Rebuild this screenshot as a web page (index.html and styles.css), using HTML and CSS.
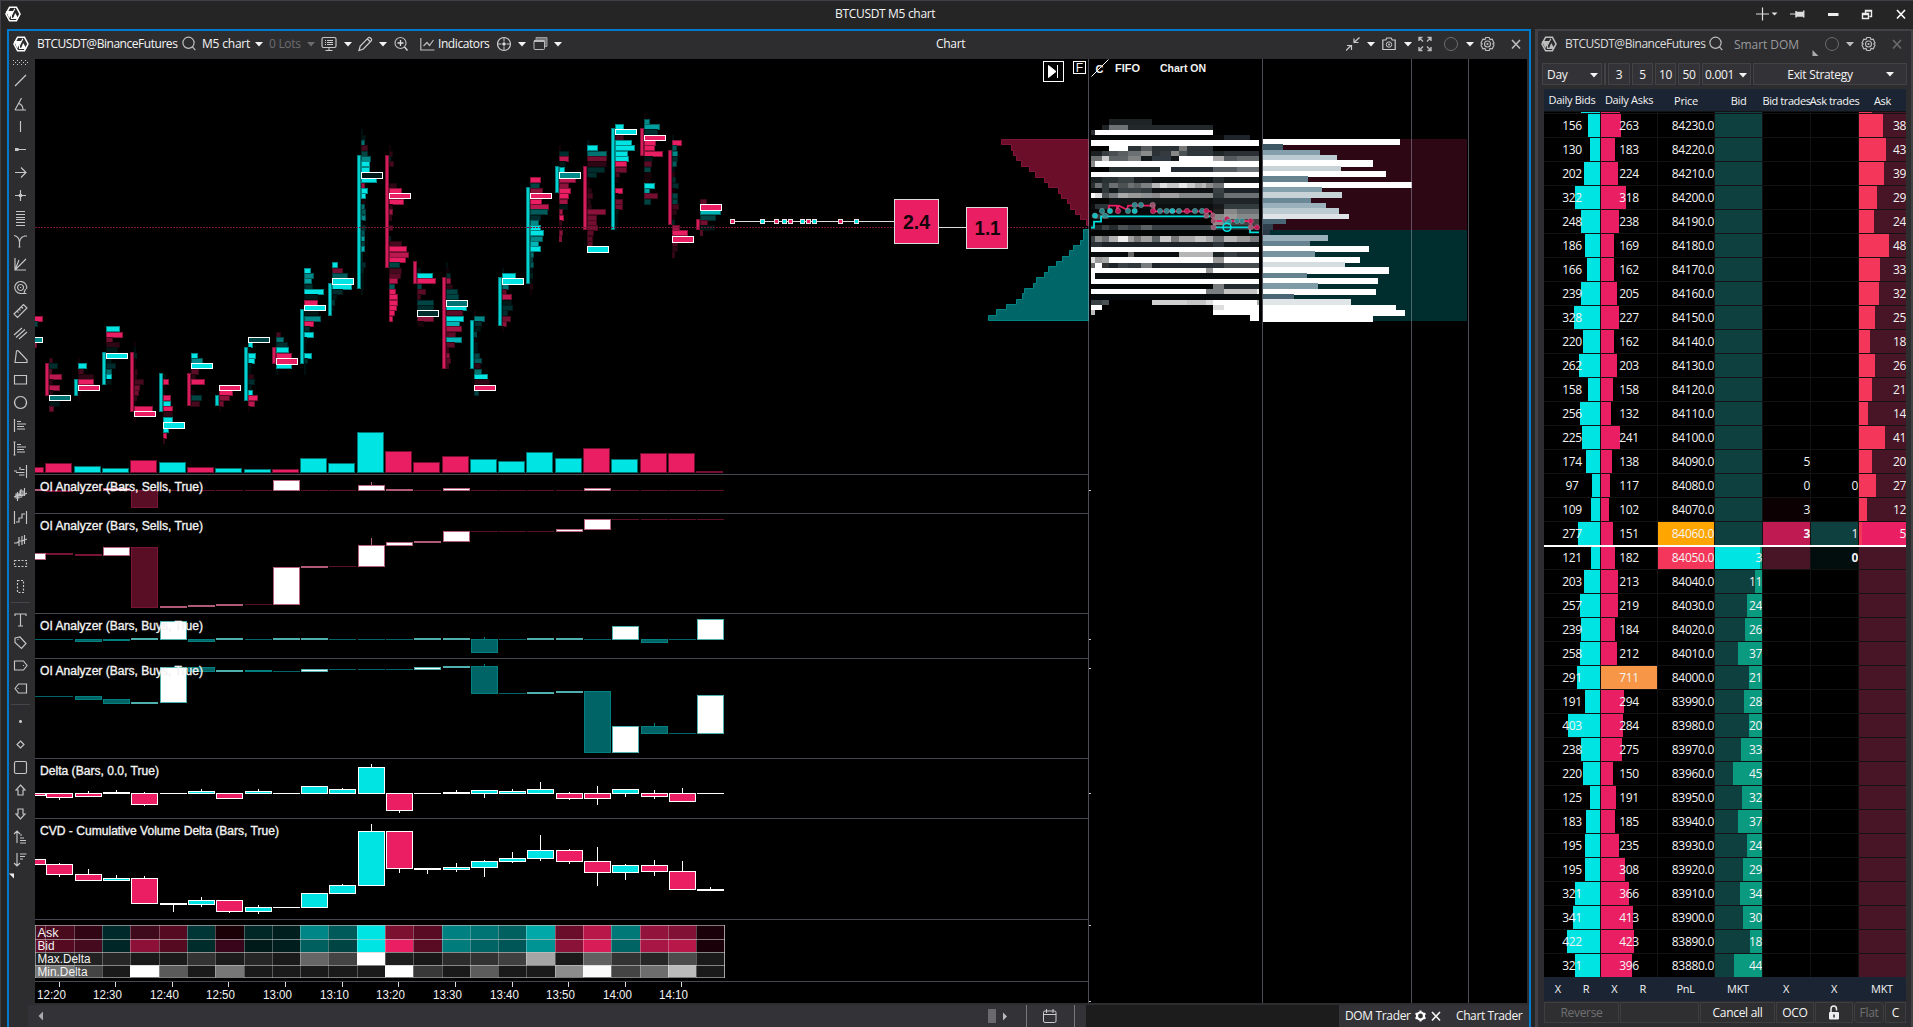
FILE: index.html
```html
<!DOCTYPE html>
<html lang="en">
<head>
<meta charset="utf-8">
<title>BTCUSDT M5 chart</title>
<link rel="stylesheet" href="styles.css">
</head>
<body>
<svg class="defs" width="0" height="0">
  <symbol id="logo" viewBox="0 0 16 16"><path d="M4.600 1.200h6.800l3.600 6.800-3.600 6.800H4.600L1 8z" fill="none" stroke="currentColor" stroke-width="1.600"/><path d="M1 5h7.800L4.200 12.200z" fill="currentColor"/><path d="M9.800 2.800L6.400 9.400v3h6.200" fill="none" stroke="currentColor" stroke-width="1.100"/><path d="M10.200 7l3.200 5.400H8z" fill="currentColor"/></symbol>
  <symbol id="search" viewBox="0 0 16 16"><circle cx="6.500" cy="6.800" r="5.600" fill="none" stroke="currentColor" stroke-width="1.200"/><path d="M10.300 10.600l3 3.600" stroke="currentColor" stroke-width="1.200"/></symbol>
  <symbol id="caret" viewBox="0 0 8 16"><path d="M0 6h8L4 10.500z" fill="currentColor"/></symbol>
  <symbol id="gear" viewBox="0 0 16 16"><path d="M5.800 1.500h3.400l.8 2 2.200-.3L14 7l-1.200 1L14 9.200l-1.800 3.600-2.200-.3-.8 2H5.800l-.8-2-2.200.3L1 9.200 2.200 8 1 7l1.800-3.800 2.200.3z" fill="none" stroke="currentColor" stroke-width="1.200"/><circle cx="7.500" cy="8" r="3" fill="none" stroke="currentColor" stroke-width="1.100"/><circle cx="7.500" cy="8" r="1.100" fill="currentColor"/></symbol>
  <symbol id="close" viewBox="0 0 12 16"><path d="M1 4l8 8.500M9 4l-8 8.500" stroke="currentColor" stroke-width="1.600"/></symbol>
  <symbol id="ring" viewBox="0 0 16 16"><circle cx="7" cy="8" r="6.500" fill="none" stroke="currentColor"/></symbol>
</svg>

<header class="titlebar">
  <svg class="i16 bright"><use href="#logo"/></svg>
  <span class="title">BTCUSDT M5 chart</span>
  <svg class="i16" viewBox="0 0 16 16"><path d="M7.500 1.500v13M1 8h13" stroke="#ddd" stroke-width="1.200"/></svg>
  <svg class="i8" viewBox="0 0 8 16"><path d="M.5 6.500h6L3.500 9.500z" fill="#ddd"/></svg>
  <svg class="i16" viewBox="0 0 16 16"><path d="M0 8h7" stroke="#ddd"/><path d="M6 5v6.500M6 6.500h7.500v3.500H6M13.700 4.500v7" stroke="#ddd" stroke-width="1.500" fill="#ddd"/></svg>
  <svg class="i16" viewBox="0 0 16 16"><path d="M0 8.500h10.500" stroke="#eee" stroke-width="3"/></svg>
  <svg class="i16" viewBox="0 0 16 16"><path d="M4.500 7V4.500h6v6H8.500M1.500 7.500h6v5h-6zM4.500 5h6M1.500 8.500h6" fill="none" stroke="#eee" stroke-width="1.400"/></svg>
  <svg class="i12 bright"><use href="#close"/></svg>
</header>

<main class="workspace">
  <section class="chart-window">
    <div class="chart-head">
      <svg class="i16 bright"><use href="#logo"/></svg>
      <span class="t-symbol">BTCUSDT@BinanceFutures</span>
      <svg class="i16 mid"><use href="#search"/></svg>
      <span class="t-tf">M5 chart</span>
      <svg class="i8"><use href="#caret"/></svg>
      <span class="dim t-lots">0 Lots</span>
      <svg class="i8 dim"><use href="#caret"/></svg>
      <svg class="i16" viewBox="0 0 16 16"><rect x="1" y="1.500" width="14" height="10" rx="1.500" fill="none" stroke="#c4c4c4" stroke-width="1.200"/><path d="M4 4.500h1M4 6.500h1M4 8.500h1M6 4.500h6M6 6.500h6M6 8.500h6M4.500 14.500h7M8 11.500v3" stroke="#ccc"/></svg>
      <svg class="i8"><use href="#caret"/></svg>
      <svg class="i16" viewBox="0 0 16 16"><path d="M1 14.500l1.200-4.500 8.300-8.300c1-1 4 1.500 3 2.800L5.300 13zM9.500 3l3 3" fill="none" stroke="#ccc" stroke-width="1.200"/></svg>
      <svg class="i8"><use href="#caret"/></svg>
      <svg class="i16" viewBox="0 0 16 16"><circle cx="6.500" cy="7" r="5.500" fill="none" stroke="#bbb" stroke-width="1.200"/><path d="M3.500 7h6M6.500 4v6M10.500 11l3 3.500" stroke="#ddd" stroke-width="1.300"/></svg>
      <svg class="i16" viewBox="0 0 16 16"><path d="M.8 2v12H14.500M3.500 10l3.500-3.500 2.500 3L13.500 4" fill="none" stroke="#bbb" stroke-width="1.200"/></svg>
      <span class="t-ind">Indicators</span>
      <svg class="i16" viewBox="0 0 16 16"><circle cx="7" cy="8" r="6.500" fill="none" stroke="#ccc" stroke-width="1.200"/><path d="M7 2v3.500M7 10.500V14M1 8h3.500M9.500 8H13" stroke="#ccc"/><circle cx="7" cy="8" r="1.700" fill="#ddd"/></svg>
      <svg class="i8"><use href="#caret"/></svg>
      <svg class="i16" viewBox="0 0 16 16"><path d="M3 4V1.500h11v9h-2.500" fill="#777" stroke="#999"/><rect x="1" y="4.500" width="10.500" height="9" rx="1" fill="#2d2d30" stroke="#bbb"/><path d="M1 5h10.500" stroke="#bbb" stroke-width="2"/></svg>
      <svg class="i8"><use href="#caret"/></svg>
      <span class="t-chart">Chart</span>
      <svg class="i16" viewBox="0 0 16 16"><path d="M0 14.500L5 9.500M1 9.500h4.500v4.500M13.500 1.500L8 6.500M8 2.500v4h4.500" fill="none" stroke="#ccc" stroke-width="1.200"/></svg>
      <svg class="i8"><use href="#caret"/></svg>
      <svg class="i16" viewBox="0 0 16 16"><path d="M.8 4h3L4.800 2h4.400l1 2h3v9.500H.8z" fill="none" stroke="#ccc" stroke-width="1.200"/><circle cx="7" cy="8.500" r="2.700" fill="none" stroke="#ccc"/><circle cx="7" cy="8.500" r="1" fill="#ccc"/></svg>
      <svg class="i8"><use href="#caret"/></svg>
      <svg class="i16" viewBox="0 0 16 16"><path d="M1 5V1.500H4.500M1 1.500l4 4M9.500 1.500H13V5M13 1.500l-4 4M1 11v3.500H4.500M1 14.500l4-4M9.500 14.500H13V11M13 14.500l-4-4" fill="none" stroke="#bbb" stroke-width="1.400"/></svg>
      <svg class="i16 dim"><use href="#ring"/></svg>
      <svg class="i8"><use href="#caret"/></svg>
      <svg class="i16 mid"><use href="#gear"/></svg>
      <svg class="i12 mid"><use href="#close"/></svg>
    </div>
    <div class="chart-body">
      <nav class="tools" id="tools"></nav>
      <svg class="plot" id="plot" width="1492" height="944" viewBox="35 59 1492 944"></svg>
    </div>
    <footer class="chart-foot">
      <div class="scroll">
        <svg class="foot-left" viewBox="0 0 8 16"><path d="M5 3.500v9L.5 8z" fill="#aaa"/></svg>
        <svg class="foot-right" viewBox="0 0 20 16"><rect x="0" y="1" width="8" height="14" fill="#6a6a6c"/><path d="M15 4.500v8l4-4z" fill="#bbb"/></svg>
      </div>
      <div class="calendar"><svg width="16" height="16" viewBox="0 0 16 16"><rect x="1.500" y="3" width="12.500" height="11.500" rx="1.500" fill="none" stroke="#ccc"/><path d="M1.500 6.500H14M4.500 1v4M11 1v4" stroke="#ccc"/></svg></div>
      <div class="gap-a"></div>
      <div class="gap-b"></div>
      <div class="tabs">
        <span class="t-dom">DOM Trader</span>
        <svg class="i12 bright" viewBox="0 0 12 16"><circle cx="5.500" cy="8" r="3.500" fill="none" stroke="#fff" stroke-width="2.200"/><path d="M5.500 2.500v2M5.500 11.500v2M.5 5.300l1.700 1M8.800 9.700l1.700 1M.5 10.700l1.700-1M8.800 6.300l1.700-1" stroke="#fff" stroke-width="2"/></svg>
        <svg class="i12"><use href="#close"/></svg>
        <span class="t-trader">Chart Trader</span>
      </div>
    </footer>
  </section>

  <section class="dom-window">
    <div class="dom-head">
      <svg class="i16 mid"><use href="#logo"/></svg>
      <span class="t-symbol soft">BTCUSDT@BinanceFutures</span>
      <svg class="i16 mid"><use href="#search"/></svg>
      <span class="t-smart">Smart DOM</span>
      <svg class="i8 corner" viewBox="0 0 8 16"><path d="M.5 10v6h6z" fill="#aaa"/></svg>
      <svg class="i16 dim"><use href="#ring"/></svg>
      <svg class="i8 mid"><use href="#caret"/></svg>
      <svg class="i16 mid"><use href="#gear"/></svg>
      <svg class="i12 dim"><use href="#close"/></svg>
    </div>
    <div class="dom-tools">
      <div class="box day"><span>Day</span><svg class="i8"><use href="#caret"/></svg></div>
      <div class="box gapbox"></div>
      <div class="box">3</div><div class="box">5</div><div class="box">10</div><div class="box">50</div>
      <div class="box lot"><span>0.001</span><svg class="i8"><use href="#caret"/></svg></div>
      <div class="box exit"><span>Exit Strategy</span><svg class="i8"><use href="#caret"/></svg></div>
    </div>
    <div class="grid-row dom-cols"><span>Daily Bids</span><span>Daily Asks</span><span class="low">Price</span><span class="low">Bid</span><span class="low tight">Bid trades</span><span class="low tight">Ask trades</span><span class="low">Ask</span></div>
    <div class="ladder" id="ladder"></div>
    <div class="dom-sum"><span>X</span><span>R</span><span>X</span><span>R</span><span class="w1">PnL</span><span class="w2">MKT</span><span class="w2">X</span><span class="w2">X</span><span class="w2">MKT</span></div>
    <div class="dom-actions">
      <div class="btn off">Reverse</div><div class="btn"></div><div class="btn">Cancel all</div><div class="btn">OCO</div>
      <div class="btn"><svg width="14" height="16" viewBox="0 0 14 16"><path d="M4 7V4c0-4 5.500-4 5.500 0v1.500" fill="none" stroke="#eee" stroke-width="1.500"/><rect x="2" y="7" width="10" height="7.500" rx="1" fill="#eee"/><path d="M7 9.500v3" stroke="#2d2d30" stroke-width="1.500"/></svg></div>
      <div class="btn off round">Flat</div><div class="btn">C</div>
    </div>
  </section>
</main>
<script src="app.js"></script>
</body>
</html>
```
FILE: styles.css
```css
* { box-sizing: border-box; }
body {
  margin: 0; width: 1913px; height: 1027px; overflow: hidden;
  background: #252526; color: #f4f4f4;
  font: 12px/16px "Open Sans", "Noto Sans", sans-serif; letter-spacing: -.3px;
  display: flex; flex-direction: column; white-space: nowrap;
  border-top: 1px solid #3f3f46; border-left: 1px solid #3f3f46;
}
svg { display: block; flex: none; }
.defs { display: none; }
.i16 { width: 16px; height: 16px; }
.i12 { width: 12px; height: 16px; }
.i8 { width: 8px; height: 16px; }
.bright { color: #fff; }
.mid { color: #bdbdbd; }
.dim { color: #6c6c6e; }

.titlebar { height: 28px; flex: none; display: grid; align-items: center; padding: 0 0 2px 4px;
  grid-template-columns: 830px 920px 16px 19px 38px 33px 35px 1fr; }
.titlebar .title { letter-spacing: -.32px; }
.workspace { flex: 1; display: flex; padding-left: 6px; gap: 4px; min-height: 0; }

.chart-window { width: 1524px; flex: none; border: 2px solid #007acc; border-bottom: 0; background: #2d2d30; display: flex; flex-direction: column; }
.chart-head { height: 28px; flex: none; display: grid; align-items: center; padding: 0 0 3px 4px;
  grid-template-columns: 24px 145px 20px 53px 14px 38px 14px 23px 14px 21px 15px 26px 18px 59px 21px 15px 21px 382px 410px 21px 15px 22px 14px 26px 22px 14px 31px 1fr; }
.t-symbol { letter-spacing: -.46px; }
.t-tf { letter-spacing: -.2px; }
.t-ind { letter-spacing: -.42px; }
.chart-head span { padding-top: 1px; }
.chart-body { display: flex; height: 944px; flex: none; }
.tools { width: 26px; flex: none; display: flex; flex-direction: column; align-items: center; padding-right: 4px; }
.tools .grip { height: 10px; width: 15px; }
.tools .tool { height: 23px; padding: 3px 0; }
.tools .rule { height: 10px; width: 19px; padding-top: 4px; }
.tools .rule::before { content: ""; display: block; height: 1px; background: #46464a; }
.tools .corner { align-self: flex-start; }
.plot { background: #000; }
.plot text { font-family: "Liberation Sans", Arial, sans-serif; letter-spacing: 0; fill: #f2f2f2; }
.plot .panel-title { font-size: 12px; stroke: #f2f2f2; stroke-width: .35px; }
.plot .axis { font-size: 12.500px; }
.plot .cell-label { font-size: 12px; }
.plot .tag { font-size: 20px; font-weight: bold; fill: #14050a; }
.plot .strong { font-size: 11px; font-weight: bold; }

.chart-foot { flex: 1; margin-top: 2px; display: flex; background: #333337; margin-left: 19px; }
.scroll { width: 999px; border-right: 1px solid #77777b; display: flex; justify-content: space-between; align-items: center; padding: 0 18px 1px 10px; }
.foot-left { width: 8px; height: 16px; }
.foot-right { width: 20px; height: 16px; }
.calendar { width: 48px; border-right: 1px solid #77777b; padding: 3px 0 0 15px; }
.gap-a { width: 11px; }
.gap-b { flex: 1; background: #1c1c1d; }
.tabs { width: 190px; display: grid; grid-template-columns: 70px 16px 25px 1fr; align-items: center; padding: 0 0 0 6px; }
.t-dom { letter-spacing: -.35px; }
.t-trader { letter-spacing: -.4px; }

.dom-window { flex: 1; background: #2d2d30; border: solid #424246; border-width: 2px 2px 0 3px; padding-left: 6px; padding-right: 3px; display: flex; flex-direction: column; }
.dom-head { height: 32px; display: grid; flex: none; align-items: center; margin-left: -3px; padding-bottom: 7px;
  grid-template-columns: 24px 144px 25px 78px 13px 21px 15px 31px 1fr; }
.dom-head span { padding-top: 1px; }
.dom-head .t-smart { padding-top: 3px; }
.soft { color: #dcdcdc; }
.t-smart { color: #9a9a9c; letter-spacing: -.05px; }
.dom-head .corner { margin-top: 8px; }
.dom-tools { display: grid; height: 22px; flex: none; margin-left: -2px; gap: 2px;
  grid-template-columns: 60px 2px 22px 21px 21px 22px 49px 154px; }
.box { background: #333337; border: 1px solid #434346; display: flex; align-items: center; justify-content: center; min-width: 0; padding-top: 1px; }
.box.day { justify-content: space-between; padding: 1px 3px 0 4px; }
.box.exit { display: grid; grid-template-columns: 132px 8px; text-align: center; padding: 2px 0 0; justify-content: start; }
.box.exit svg { margin-top: -2px; }
.gapbox { border-width: 0 1px; }
.box.lot { justify-content: space-between; padding: 1px 3px 0 2px; }

.grid-row { display: grid; grid-template-columns: 56px 56px 56px 47px 47px 47px 47px; column-gap: 1px; }
.dom-cols { height: 22px; flex: none; margin: 4px 0 0; width: 362px; background: #1b2433; font-size: 11px; line-height: 22px; text-align: center; }
.dom-cols .low { padding-top: 1px; }
.dom-cols span { overflow: visible; display: flex; justify-content: center; }
.dom-cols .tight { letter-spacing: -.4px; }
.ladder { background: #131314; height: 866px; width: 362px; flex: none; display: flex; flex-direction: column; gap: 1px; padding-top: 1px; position: relative; overflow: hidden; }
.ladder .grid-row { height: 23px; flex: none; }
.ladder .grid-row.peek { height: 1px; }
.cell { background: #000; display: grid; overflow: hidden; }
.cell > * { grid-area: 1 / 1; }
.cell .bar { height: 100%; }
.cell .num { line-height: 23px; text-align: right; z-index: 1; }
.cell.center .num { text-align: center; }
.cell.bids .bar, .cell.bid .bar { justify-self: end; }
.bids .bar { background: #00e4e4; }
.asks .bar { background: #e91e63; }
.cell.bid { background: #0f4040; }
.bid .bar { background: #0a9a80; }
.cell.ask { background: #471525; }
.ask .bar { background: #f4365a; }
.ladder .last { background: #ffa500; }
.ladder .mark { background: #f4365a; }
.ladder .hot { background: #f79646; }
.ladder .best { background: #00e4e4; }
.ladder .ask.best { background: #e91e63; }
.cell.t-a { background: #0c0003; }
.cell.t-b { background: #c01a52; }
.cell.t-c { background: #0f4040; }
.cell.t-d { background: #471525; }
.cell.t-e { background: #020d0d; }
.heavy { font-weight: bold; }
.spread { position: absolute; left: 0; right: 0; top: 434px; height: 2px; background: #fff; z-index: 2; }
.dom-sum { display: flex; height: 24px; flex: none; width: 362px; background: #1b2433; line-height: 24px; font-size: 11px; text-align: center; }
.dom-sum span { width: 28.500px; padding-right: 1px; }
.dom-sum .w1 { width: 57px; padding: 0; }
.dom-sum .w2 { width: 48px; flex: none; padding: 0; }
.dom-actions { display: grid; height: 21px; flex: none; margin-top: 1px; gap: 1px; width: 362px;
  grid-template-columns: 75px 79px 75px 38px 38px 30px 21px; }
.btn { border: 1px solid #3e3e41; background: #2f2f32; display: flex; align-items: center; justify-content: center; min-width: 0; }
.btn.off { color: #6f6f71; }
.round { border-radius: 4px; }
```
FILE: app.js
```js
const CYAN = [0, 228, 228], PINK = [233, 30, 99];
const mix = (c, k) => 'rgb(' + c.map(v => Math.round(v * k)).join(',') + ')';
const out = [];
const rect = (x, y, w, h, fill) => out.push(`<rect x="${x}" y="${y}" width="${w}" height="${h}" fill="${fill}"/>`);
const framed = (x, y, w, h, fill, edge) => {
  rect(x, y, w, h, edge);
  if (w > 2 && h > 2) rect(x + 1, y + 1, w - 2, h - 2, fill);
};
const text = (x, y, s, cls, len, anchor) => out.push(
  `<text x="${x}" y="${y}" class="${cls}"${len ? ` textLength="${len}" lengthAdjust="spacingAndGlyphs"` : ''}${anchor ? ` text-anchor="${anchor}"` : ''}>${s}</text>`);

// Left edge of every five-minute bar
const X = [17, 45, 74, 102, 130, 159, 187, 215, 244, 272, 300, 328, 357, 385, 413, 442, 470, 498, 526, 555, 583, 611, 640, 668, 696];
const volTop = [467, 463, 466, 468, 460, 462, 467, 468, 469, 469, 458, 463, 432, 451, 462, 456, 459, 461, 452, 458, 448, 459, 453, 453, 471];
const side = 'rrccrcrccrcccrrrccccrcrrr';

// Clusters: body range, first price level, then side + intensity + width; capitals are the point of control
const clusters = [
  [0, 0, 27, 'r922 c317 . . C622 r716'],
  [363, 396, 35, 'r34 c29 r53 r813 r24 r811 r24 C522 c111 r55'],
  [379, 396, 35, 'r12 c99 r36 r216 r916 R922 r13 r12'],
  [352, 385, 29, 'c914 r917 r57 r214 c112 C922 c16 c210 c56 c96 c16'],
  [352, 412, 32, 'r12 c12 c23 r12 r12 r24 r23 r310 r56 r55 r33 r12 r919 R922 r12'],
  [373, 412, 38, 'c13 r96 r13 c12 r98 c98 r910 r210 c910 C922 c96 r94 r32'],
  [373, 406, 34, 'c97 c612 C922 r48 r25 r914 . r14 c311 r39'],
  [395, 406, 40, 'R922 r914 r611 r55 r12'],
  [347, 401, 31, 'C322 c95 c13 c98 c97 c14 c13 r26 c27 c14 c95 r910 r87 r12'],
  [347, 364, 30, 'r35 c58 c212 c913 r916 R922 c916 c12'],
  [309, 364, 18, 'c97 c610 c78 c29 c920 c114 r914 C922 c115 c617 r910 c26 c910 c13 c12 c12 c98 c24 c12 c12'],
  [283, 316, 17, 'c96 r511 c416 C922 c920 c211 c15 c33 c12'],
  [155, 289, -8, 'c12 c15 c54 r37 c37 c610 c99 c99 C122 c916 r74 c97 c95 r15 c54 c45 c65 c12 c25 c44 c74 c34 c84 c22 c22 c25 c23 c13 c13 c13 c12'],
  [155, 268, -5, 'r12 r24 c22 r35 . . . r28 r913 R922 r915 r24 r74 r33 . r44 . c22 r313 r918 r820 r917 c311 r313 r412 r89 c46 r97 r99 r99 r98 r96 r94'],
  [261, 284, 18, 'c14 c916 r919 c35 r49 r34 c317 c217 C222 r617 r17'],
  [277, 369, 17, 'c12 r13 c25 r75 r27 c312 c313 C522 c921 r417 c918 c814 r716 r410 c816 r49 r33 r64 r45 r43'],
  [320, 369, 26, 'r12 c611 c28 c17 c43 r12 c14 c14 c36 c48 r27 c58 c914 r216 R922 c35'],
  [277, 326, 18, 'c12 c914 C922 c57 r45 r810 c110 c211 c26 r59 r65 r12'],
  [187, 284, 1, 'r911 c310 r613 R922 r912 r819 c418 c211 c69 c911 c914 c613 c89 c911 c54 c43 c44 c13 c23 c12 r23 r12'],
  [166, 193, -5, 'r12 c210 r810 c17 c96 C622 r817 r610 r912 r910 r79 c19 r74 r95 r33 r23 r64 r83'],
  [166, 230, -6, 'c13 c911 c520 r520 r220 c218 c210 r13 r13 r25 r36 r24 r25 r619 r510 r510 r511 r47 r46 r46 C922'],
  [128, 230, -9, 'c99 C922 r39 c917 c920 c913 c914 r912 r512 r35 r14 . r98 r13 r58 r58 c14 c13 c13 c12'],
  [128, 156, -11, 'r12 c66 c716 c214 R922 r912 r911 r919 c19 r48 c37 r18 r17 c911 c76 r514 c37'],
  [150, 225, -7, 'c12 r910 c45 c66 c26 c45 c13 r23 c24 c27 r13 c36 c36 r37 r25 r13 c23 r78 r916 R922 r36 r26 r33'],
  [219, 230, 5, 'r47 R922 c821 c316 r58 c115 r53']
];
clusters.forEach(([top, bot, k, rows], i) => {
  const main = side[i] === 'c' ? CYAN : PINK;
  framed(X[i], volTop[i], 27, 473 - volTop[i], mix(main, 1), mix(main, .5));
  let poc = '';
  rows.split(' ').forEach((t, n) => {
    if (t === '.') return;
    const c = t[0].toLowerCase() === 'c' ? CYAN : PINK;
    const v = t[1] === '9' ? 1 : t[1] / 10;
    const y = Math.round(172 + 5.317 * (k + n)), w = +t.slice(2);
    if (t[0] < 'a') { poc = [y, mix(c, v)]; return; }
    if (w < 4) rect(X[i] + 4, y, w, 6, mix(c, v * .7));
    else framed(X[i] + 4, y, w, 6, mix(c, v), mix(c, v * .6));
  });
  if (poc) framed(X[i] + 4, poc[0], 22, poc[0] % 2 ? 6 : 7, poc[1], '#fff');
  if (bot) framed(X[i], top, 4, bot - top, mix(main, .92), mix(main, .55));
});

// Current price line and last trades
out.push('<path d="M35 227.500H1088" stroke="#7a1738" stroke-dasharray="2 1"/>');
rect(732, 221, 162, 1, '#ddd'); rect(939, 227, 27, 1, '#ddd');
[[732, 1], [762, 0], [776, 1], [784, 0], [790, 1], [802, 0], [808, 1], [814, 0], [840, 1], [856, 0]]
  .forEach(([x, r]) => framed(x - 2, 219, 5, 5, r ? '#e91e63' : '#00e4e4', '#e4e4e4'));
framed(894, 199, 45, 45, '#ea1e63', '#ddd'); text(916.500, 229, '2.4', 'tag', 27, 'middle');
framed(966, 207, 42, 42, '#ea1e63', '#ddd'); text(987.500, 235, '1.1', 'tag', 26, 'middle');

// Cumulative depth on both sides of the market: stepped outlines closed on the divider
const steps = (edges, y0, pitch, fill, edge) => {
  let d = `M1088.500 ${y0 + .5}`;
  edges.forEach((p, i) => {
    const x = Math.round(960 + p / 2.8) + .5;
    d += `L${x} ${Math.round(y0 + pitch * i) + .5}L${x} ${Math.round(y0 + pitch * (i + 1)) + .5}`;
  });
  d += `L1088.500 ${Math.round(y0 + pitch * edges.length) + .5}Z`;
  out.push(`<path d="${d}" fill="${fill}" stroke="${edge}"/>`);
};
steps([115, 143, 147, 158, 172, 193, 210, 236, 245, 273, 284, 300, 308, 322, 337, 354], 139, 5.360, '#6a0e2a', '#82153a');
steps([344, 344, 337, 317, 305, 286, 269, 245, 236, 213, 203, 180, 174, 157, 129, 101, 78], 229, 5.350, '#006668', '#008484');

// Heat map of resting orders; columns are offsets in thirds of a pixel
const heat = {
  12: '72 1e2426 201 0', 30: '51 1e2426 72 6d7275 129 23282b 384 0', 45: '18 2a3032 30 fff 384 0',
  60: '18 050707 384 080808 417 1e242a 495 0', 75: '18 fff',
  93: '18 000 72 fff 129 2a3236 168 585c5e 201 2a3236 282 777 306 2c3438 384 000',
  108: '18 1a2022 51 3a4042 72 4a5052 99 5a6062 129 6b7072 168 8a8c8c 201 2b3338 225 343a40 258 868888 282 4c5254 306 30383c 384 202628 417 2a3034',
  123: '18 6b6f70 51 ccc 72 5f6466 129 808283 168 14191b 201 333b42 258 16191b 282 fff 384 aaa 417 545a5d 456 666b6d',
  138: '18 888 30 fff', 155: '18 000 72 262d2f 225 fff 258 262c34 384 565c60 456 70757a', 171: '18 fff',
  186: '18 1c2224 51 2b3234 99 3a4244 147 1c2224 201 0e1213 384 252b2d 417 141819',
  204: '18 2a3032 30 6c7072 51 30383a 72 6c7072 99 4c5254 129 6d7173 147 5c6264 168 7c8082 201 b8b8b8 225 e0e0e0 246 c8c8c8 282 eaeaea 306 ccc 330 aaa 350 bbb 363 8e8e8e 384 6d7173 417 fff',
  219: '18 0c1011 51 30383b 72 14191b 99 3a4145 168 30383b 201 0d1112 384 3a4145 417 1d2326',
  234: '18 fff 30 ddd 51 4c5254 72 777b7d 99 aaa 129 999 168 8e9293 201 8a8a8a 225 a0a0a0 282 858989 384 353c40 417 6c7173',
  249: '18 040606 72 121718 384 1e2428', 267: '18 0a0e0f 30 2c3336 72 0c0f10 384 16191b 417 333a3e',
  282: '18 060809 384 222 417 888 456 6a6f71', 297: '18 0a0a0a 30 333 72 080a0a 384 888 417 9a9a9a 456 858989',
  312: '18 000 384 8a8a8a 417 444', 330: '18 202628 51 3c4346 72 262c2e 99 4c5254 129 3a4144 168 5c6264 201 3a4144 384 262c2e',
  345: '18 030505',
  363: '18 3a4144 30 8e8e8e 51 6c7072 72 b0b0b0 99 eee 129 a0a0a0 147 777 168 a0a0a0 201 5c6264 225 c8c8c8 258 777 282 aaa 330 c4c4c4 363 aaa 384 6d7173 417 b4b4b4 456 9a9a9a 495 777b7d',
  380: '18 2a3236 51 1d2326 384 2d353a 417 14191b', 396: '18 fff',
  411: '18 080b0c 129 666 147 0b0e0f 282 b5b5b5 384 1b2022 417 3a4144 456 2a3034',
  426: '18 ddd 30 999 51 a8a8a8 72 fff 384 999 417 fff',
  444: '18 666 30 fff 51 333 72 1d2326 99 3a4144 129 30383c 168 777b7d 201 1d2326 225 262c34 384 2a3236 417 484e50',
  459: '18 fff 363 999 384 fff', 474: '18 fff 30 0a0d0e', 492: '18 fff', 507: '18 030505 384 777b7d 417 222a2e',
  522: '18 fff 363 7a7e80 417 c4c4c4 516 eee', 537: '18 060a0b',
  554: '18 3a4144 51 4c5254 72 000 201 d0d0d0 306 c4c4c4 363 ddd 384 fff 516 aaa',
  570: '18 fff 51 000 384 ddd 417 fff', 585: '18 bbb 30 000 384 fff', 600: '495 fff', 617: ''
};
const ys = Object.keys(heat).map(Number);
ys.slice(0, -1).forEach((y, i) => {
  const t = heat[y].split(' ');
  for (let j = 0; j < t.length; j += 2) {
    if (t[j + 1] === '0') continue;
    const a = Math.round(+t[j] / 3), b = Math.round((+t[j + 2] || 522) / 3);
    const p = Math.round(y / 3), q = Math.round(ys[i + 1] / 3);
    rect(1085 + a, 115 + p, b - a, q - p, '#' + t[j + 1]);
  }
});
const P = pts => 'M' + pts.map(([x, y]) => (1085 + x / 3).toFixed(1) + ' ' + (115 + y / 3).toFixed(1)).join('L');
out.push(`<path d="${P([[72, 288], [72, 272], [96, 272], [96, 284], [102, 272], [126, 284], [129, 272], [208, 272], [208, 289], [378, 289], [384, 300], [384, 318], [497, 318], [497, 337], [522, 337]])}" fill="none" stroke="#e91e63" stroke-width="1.800"/>`);
out.push(`<path d="${P([[18, 338], [27, 338], [27, 320], [48, 320], [48, 304], [375, 304]])}${P([[384, 337], [495, 337], [495, 352], [522, 352]])}" fill="none" stroke="#0dd" stroke-width="1.800"/>`);
const dots = [[30, 302, 1], [51, 288, 2], [75, 288, 1], [60, 302, 2], [99, 288, 0], [129, 288, 2], [149, 288, 1], [149, 270, 2], [168, 270, 2], [203, 270, 3], [204, 288, 0], [225, 288, 2], [245, 288, 2], [262, 288, 1], [282, 288, 2], [306, 288, 0], [330, 288, 2], [351, 288, 2], [364, 288, 0], [364, 302, 3], [384, 302, 3], [386, 318, 3], [386, 337, 3], [420, 318, 2], [426, 312, 0], [432, 320, 2], [456, 318, 2], [471, 318, 2], [497, 318, 0], [497, 337, 3], [516, 337, 0]];
dots.forEach(([x, y, t]) => out.push(`<circle cx="${1085 + x / 3}" cy="${115 + y / 3}" r="2.700" fill="${['#c8185a', '#1cc', '#2a8c90', '#9c5870'][t]}" fill-opacity=".92" stroke="#bbb" stroke-opacity=".3"/>`));
out.push('<circle cx="1227" cy="227.300" r="4" fill="none" stroke="#00e4e4" stroke-width="1.600"/>');

// Resting order profile
rect(1263, 139, 204, 91, '#2e0715'); rect(1263, 230, 204, 91, '#002e2e');
const W = 'fff';
[[1232, W], [904, '3f5866'], [1008, '84a0ac'], [1056, 'bccad1'], [1156, W], [1067, 'c8d3d7'], [1193, W], [973, '66838f'], [1266, W], [1014, '84a0ac'], [1070, 'c8d3d7'], [983, '6b8896'], [1025, '9ab0ba'], [1061, 'bccad1'], [1089, 'dde3e6'], [913, '4a6573'], [876, '2f3f4b'], [868, '2a3a45'], [1030, '9ab0ba'], [980, '66838f'], [1145, W], [994, '7894a0'], [1120, W], [1079, 'd5dde1'], [1201, W], [972, '66838f'], [1170, W], [1002, '7f9ba8'], [1165, W], [935, '4a6573'], [1095, 'e0e6e8'], [1221, W], [1246, W], [1156, W]]
  .forEach(([p, c], i) => {
    const y = Math.round(139 + 5.343 * i);
    rect(1263, y, Math.round(p / 2.8 + 960 - 1263), Math.round(139 + 5.343 * (i + 1)) - y + (c === W ? 1 : 0), '#' + c);
  });

// Frame lines
[1088, 1262, 1411, 1468].forEach(x => out.push(`<rect x="${x}" y="59" width="1" height="944" fill="#9a9ab4" fill-opacity=".5"/>`));
[474, 513, 613, 658, 758, 818, 919, 981].forEach(y => rect(35, y, 1053, 1, '#484854'));
[490, 639, 668, 793, 925, 1001].forEach(y => rect(1089, y, 2, 1, '#ccc'));

// Indicator panels: kind, top, bottom, wick top, wick bottom
const KIND = {
  w: ['#fff', '#b5607c'], d: ['#5a0e26', '#7a1436'], p: ['#b05a78', '#b05a78'], l: ['#5c1029', '#5c1029'],
  W: ['#fff', '#4fb0b0'], D: ['#006466', '#008080'], Q: ['#4fb0b0', '#4fb0b0'], L: ['#006468', '#006468'],
  c: ['#00e4e4', '#fff'], r: ['#ec1e63', '#fff'], n: ['#fff', '#fff']
};
const panel = rows => rows.split('|').forEach((s, i) => {
  const [k, a, b, hi, lo] = s.split(' ');
  const [fill, edge] = KIND[k], top = +a, bot = +b;
  if (hi && +hi) rect(X[i] + 14, +hi, 1, top - hi, edge);
  if (lo) rect(X[i] + 14, bot, 1, lo - bot, edge);
  framed(X[i] + 1, top, i ? 27 : 28, bot - top, fill, edge);
});
panel('p 489 491|d 490 492|l 490 491|w 488 491|d 490 508|l 490 491|l 490 491|l 490 491|l 490 491|w 480 491|l 490 491|l 490 491|w 485 491 482|p 489 491|l 490 491|w 488 491|l 490 491|l 490 491|l 490 491|l 490 491|w 488 491|l 490 491|l 490 491|l 490 491|l 490 491');
panel('w 553 560|d 553 555|d 554 556|w 547 556|d 547 608|p 606 608|p 605 607|p 604 606|l 604 605|w 567 605|p 566 568|l 566 567|w 545 567 538|w 542 546|p 541 543|w 531 542|l 531 532|l 531 532|l 531 532|w 529 532|w 519 530|l 519 520|l 519 520|l 519 520|l 519 520');
panel('L 639 640|L 639 640|D 639 642|D 639 641|Q 638 640|W 621 640|D 639 642|Q 638 640|L 639 640|Q 638 640|Q 638 640|L 639 640|L 639 640|L 639 640|Q 638 640|Q 638 640|D 639 653 637|L 639 640|Q 638 640|Q 638 640|L 639 640|W 626 640|D 639 643|L 639 640|W 619 640');
panel('L 696 697|L 696 697|D 696 700|D 699 704|Q 702 704|W 667 703|D 667 672|Q 670 672|D 670 672|L 671 672|W 669 672|L 669 670|L 669 670|L 669 670|W 667 670|Q 666 668|D 666 694 664|L 693 694|Q 692 694|Q 691 693|D 691 753|W 726 753|D 726 734 723|L 733 734|W 695 734');
panel('r 793 796|r 793 798 0 800|r 793 797 791|n 792 794 790|r 793 805 792 806|n 793 794|c 791 794 789|r 793 799|c 791 794 789|n 793 794|c 786 794|c 789 794 788|c 767 794 764|r 793 811 0 813|n 793 794|n 792 794 790|c 790 794 0 798|c 791 794 789|c 789 794 782|r 793 799 792 800|r 793 799 786 805|c 789 794 0 797|r 793 797 790 799|r 793 802 788|n 793 794');
panel('r 859 865|r 864 875 863 877|r 874 881 869|c 878 881 875|r 878 904 876|n 903 905 0 912|c 900 905 897 907|r 900 912 0 913|c 907 912 905 914|n 907 908|c 893 908|c 885 894 884|c 831 886 824|r 831 869 0 873|n 868 870 0 874|c 867 870 863 872|c 861 868 860 877|c 858 862 852 863|c 850 859 835 861|r 850 862 849 864|r 861 873 847 886|c 865 873 864 880|r 865 872 860 876|r 871 890 861|n 889 891 887');

// Cluster statistics
const stats = [
  '4a0a1e 4a0a1e 320515 00292b 3f0a1c 550a22 003636 1a0006 002626 001e1e 008686 005a5a 00e4e4 7c1030 5a0b24 008080 007474 006060 00a8a8 6a0d2a b8174a 007878 92133c 821136 1a0008',
  '660c2a 550a22 450a1e 002628 8c1038 550a22 002c2c 38051a 001a1a 001e1e 006060 004444 00e4e4 e91e63 5a0b24 007c7c 006464 005656 009494 8a1238 d81c58 006464 a81646 b8174a 1a0008',
  '222 222 222 262626 1a1a1a 1a1a1a 333 1c1c1c 262626 1a1a1a 666 444 fff 1e1e1e 181818 2c2c2c 333 404040 a5a5a5 1a1a1a 606060 333 262626 4c4c4c 1a1a1a',
  '777 777 444 1a1a1a fff 5a5a5a 1a1a1a 777 1a1a1a 1a1a1a 1a1a1a 1a1a1a 1a1a1a fff 383838 1a1a1a 5c5c5c 1a1a1a 1a1a1a 8c8c8c fafafa 444 6d6d6d bbb 1a1a1a'
];
const sy = [925, 939, 952, 965, 977];
stats.forEach((s, r) => s.split(' ').forEach((c, i) => rect(X[i], sy[r], (X[i + 1] || 725) - X[i], sy[r + 1] - sy[r], '#' + c)));
X.slice(1).concat(724).forEach((x, i) => out.push(`<rect x="${x}" y="925" width="1" height="53" fill="#fff" fill-opacity="${i === 24 ? .6 : .28}"/>`));
rect(35, 925, 1, 53, '#888');
sy.forEach(y => out.push(`<rect x="35" y="${y}" width="690" height="1" fill="#ccc" fill-opacity=".6"/>`));
[['Ask', 937, 21], ['Bid', 950, 17], ['Max.Delta', 963, 53], ['Min.Delta', 976, 50]].forEach(([s, y, w]) => text(37.500, y, s, 'cell-label', w));

[['OI Analyzer (Bars, Sells, True)', 491, 163], ['OI Analyzer (Bars, Sells, True)', 530, 163], ['OI Analyzer (Bars, Buys, True)', 630, 163], ['OI Analyzer (Bars, Buys, True)', 675, 163], ['Delta (Bars, 0.0, True)', 775, 119], ['CVD - Cumulative Volume Delta (Bars, True)', 835, 239]]
  .forEach(([s, y, w]) => text(40, y, s, 'panel-title', w));

['12:20', '12:30', '12:40', '12:50', '13:00', '13:10', '13:20', '13:30', '13:40', '13:50', '14:00', '14:10'].forEach((s, i) => {
  const x = Math.round(58.500 + 56.630 * i);
  rect(x, 982, 1, 5, '#ddd'); text(x - 7.500, 999, s, 'axis', 29, 'middle');
});

// Chart trader controls
out.push('<rect x="1043.500" y="61.500" width="20" height="20" fill="#000" stroke="#fff"/><path d="M1048.500 65.500v12l7.500-6zM1057.500 65v13" fill="#fff" stroke="#fff"/>');
out.push('<rect x="1073.500" y="61.500" width="12" height="12" fill="#000" stroke="#fff"/><path d="M1091.500 76.500l17-17" stroke="#fff"/>');
text(1079.500, 72, 'F', 'cell-label', 0, 'middle'); text(1099.500, 72.500, 'C', 'strong', 0, 'middle');
text(1115, 72, 'FIFO', 'strong', 25); text(1160, 72, 'Chart ON', 'strong', 46);
document.getElementById('plot').innerHTML = out.join('');

// Drawing tools
const tools = [
  'M3 14L14 3', 'M3 15h11M3 15L9.500 3M7 8.500q4 1.500 4 6.500', 'M8.500 3v11', 'M3 8.500h11M3 7.500h3v2H3', 'M3 8.500h11M9 3.500l5 5-5 5', 'M3 8.500h11M8.500 3v11M7.500 7.500h2v2h-2z',
  'M4 1.500h9M4 4.500h9M4 7.500h9M4 9.500h9M4 12.500h9M4 15.500h9', 'M2 2.500q5 1 5.500 6.500M7.500 9q1-6 6.500-6M7.500 8.500v6M6.500 14h2M12 3h3', 'M3 2v12h11M3 14L14 3M3 14L7 4',
  'M14.500 14.500H8.500a6 6 0 1 1 6-4.500M12 14l1.500-4M8.500 5.500a3 3 0 1 0 .1 0M8.500 8v1', 'M2 12L11.500 2.500l3.500 3.500L5.500 15.500zM5 9l1.500 1.500M7 7l1.500 1.500M9.500 5l1.500 1.500', 'M2 10L10 3M4 12.500L13 4.500M7 14L15 7',
  'M3 14.500L4.500 3q1-1 2 0l8.500 9v2.500z', 'M2.500 4.500h12v8.500h-12z', 'M8.500 2.500a6 6 0 1 0 .1 0',
  'M2.500 2v13M5 4.500h4M5 7h9M5 9.500h7M5 12h8', 'M2.500 2v13M1.500 2h2M1.500 15h2M5 4.500h4M5 7h9M5 9.500h7M5 12h8', 'M14.500 2v13M2 8h3M12.500 6.500H9M12.500 9.500H4M12.500 12H7M8 4v3',
  'M2 11l4-2 4 1 5-3M5.500 6v9M9 3v9M12.500 2v8M4 8h3v4H4zM8 5h3v4H8z', 'M2.500 2v13M14.500 2v13M4 13h3V9h3V5h3', 'M2 11h3l2-2h3l5-2M7 5v9M10 4v9M12.500 3v9',
  'D M2.500 5.500h12v6h-12z', 'D M5.500 2.500h6v12h-6z', '-',
  'M3 5V3h11v2M8.500 3v12M6 15h5', 'M3 4l5-1 6 6.500-4.500 5L3 8.500zM5.500 5.500h1', 'M2.500 4h9l3.500 4.500-3.500 4.500h-9zM11 8.500h1', 'M14.500 4h-8L3 8.500 6.500 13h8zM5.500 8.500h1', '-',
  'M8 7.500h1v2H8zM7 8.500h3', 'M8.500 5L12 8.500 8.500 12 5 8.500z', 'R', 'M8.500 3L13 8h-2v5H6V8H4z', 'M8.500 14L4 9h2V4h5v5h2z', 'M5 15V3M2 6l3-3 3 3M8 7h2M8 10h4M8 12.500h6M8 15h6', 'M5 2v13M2 12l3 3 3-3M8 3h6.500M8 5.500h5M8 8h3'
];
document.getElementById('tools').innerHTML =
  '<div class="grip"><svg width="15" height="7"><path d="M0 1.500h15M0 5.500h15" stroke="#ccc" stroke-dasharray="1 3"/><path d="M2 3.500h13" stroke="#ccc" stroke-dasharray="1 3"/></svg></div>' +
  tools.map(d => {
    if (d === '-') return '<div class="rule"></div>';
    const body = d === 'R' ? '<rect x="2.500" y="2.500" width="12" height="12" rx="1.500"/>' : `<path d="${d.replace('D ', '')}"${d[0] === 'D' ? ' stroke-dasharray="2 1.500"' : ''}/>`;
    return `<div class="tool"><svg width="17" height="17" viewBox="0 0 17 17" fill="none" stroke="#c6c6c6" stroke-width="1.150">${body}</svg></div>`;
  }).join('') + '<svg class="corner" width="6" height="8"><path d="M0 2.500h5v5z" fill="#eee"/></svg>';

// Price ladder
const bids = [156, 130, 202, 322, 248, 186, 166, 239, 328, 220, 262, 158, 256, 225, 174, 97, 109, 277, 121, 203, 257, 239, 258, 291, 191, 403, 238, 220, 125, 183, 195, 195, 321, 341, 422, 321];
const asks = [263, 183, 224, 318, 238, 169, 162, 205, 227, 162, 203, 158, 132, 241, 138, 117, 102, 151, 182, 213, 219, 184, 212, 711, 294, 284, 275, 150, 191, 185, 235, 308, 366, 413, 423, 396];
const askSize = [38, 43, 39, 29, 24, 48, 33, 32, 25, 18, 26, 21, 14, 41, 20, 27, 12, 5];
const bidSize = [3, 11, 24, 26, 37, 21, 28, 20, 33, 45, 32, 37, 24, 29, 34, 30, 18, 44];
const trades = { 14: [['', '5'], ['', '']], 15: [['', '0'], ['', '0']], 16: [['t-a', '3'], ['', '']], 17: [['t-b heavy', '3'], ['t-c', '1']], 18: [['t-d', ''], ['t-e heavy', '0']] };
const cell = (cls, v, w) => `<div class="cell ${cls}">${w ? `<i class="bar" style="width:${w}px"></i>` : ''}<span class="num">${v}</span></div>`;
let html = '<div class="grid-row peek">' + cell('bids', '', 19) + cell('asks', '', 19) + cell('', '') + cell('bid', '') + cell('', '') + cell('', '') + cell('ask', '', 13) + '</div>';
bids.forEach((b, i) => {
  const a = asks[i], t = trades[i] || [['', ''], ['', '']];
  const bs = i >= 18 ? bidSize[i - 18] : '', as = i < 18 ? askSize[i] : '';
  html += '<div class="grid-row">' + cell('bids center', b, Math.round(b * .0785)) +
    cell('asks center' + (a === 711 ? ' hot' : ''), a, a === 711 ? 0 : Math.round(a * .0775)) +
    cell(i === 17 ? 'last' : i === 18 ? 'mark' : '', (84230 - 10 * i) + '.0') +
    cell('bid' + (i === 18 ? ' best' : ''), bs, bs ? Math.round(bs * .64) : 0) +
    cell(t[0][0], t[0][1]) + cell(t[1][0], t[1][1]) +
    cell('ask' + (i === 17 ? ' best' : ''), as, as ? Math.round(as * .63) : 0) + '</div>';
});
document.getElementById('ladder').innerHTML = html + '<div class="spread"></div>';
```
